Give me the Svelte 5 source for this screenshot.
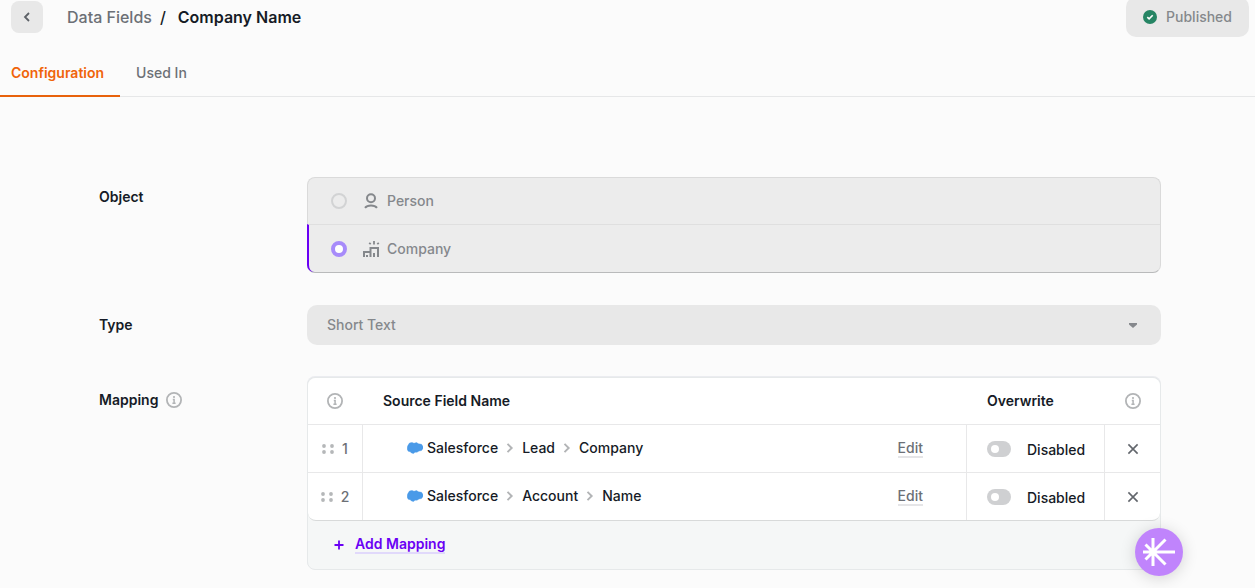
<script>
	const tabs = [
		{ label: 'Configuration', active: true },
		{ label: 'Used In', active: false }
	];

	let object = $state('company');

	let mappings = $state([
		{ id: 1, path: ['Salesforce', 'Lead', 'Company'], overwrite: false },
		{ id: 2, path: ['Salesforce', 'Account', 'Name'], overwrite: false }
	]);

	function remove(id) {
		mappings = mappings.filter((m) => m.id !== id);
	}
</script>

{#snippet info()}
	<svg class="info" width="16" height="16" viewBox="0 0 16 16" role="img" aria-label="Info">
		<circle cx="8" cy="8" r="7.1" fill="none" stroke="currentColor" stroke-width="1.8" />
		<circle cx="8" cy="5" r="1.1" fill="currentColor" />
		<path d="M6.8 7.6H8.1V11.2M6.4 11.3H9.6" fill="none" stroke="currentColor" stroke-width="1.5" />
	</svg>
{/snippet}

<header>
	<button class="back" aria-label="Back">
		<svg width="16" height="16" viewBox="0 0 16 16">
			<path d="M10 4 6 8l4 4" fill="none" stroke="currentColor" stroke-width="1.8" />
		</svg>
	</button>
	<nav class="breadcrumb" aria-label="Breadcrumb">
		<a href="#fields">Data Fields</a>
		<span>/</span>
		<h1>Company Name</h1>
	</nav>
	<button class="published" disabled>
		<svg width="14" height="14" viewBox="0 0 14 14">
			<circle cx="7" cy="7" r="7" fill="#268564" />
			<path d="m4.3 7.2 1.8 1.7 3.6-3.6" fill="none" stroke="#fff" stroke-width="1.6" />
		</svg>
		Published
	</button>
</header>

<nav class="tabs" aria-label="Sections">
	{#each tabs as tab}
		<a href="#{tab.label}" class:active={tab.active}>{tab.label}</a>
	{/each}
</nav>

<main>
	<section>
		<h2 id="object-label">Object</h2>
		<div class="options" role="radiogroup" aria-labelledby="object-label">
			<label>
				<input type="radio" name="object" value="person" bind:group={object} disabled />
				<svg width="16" height="16" viewBox="0 0 16 16" fill="none" stroke="currentColor" stroke-width="2">
					<circle cx="8" cy="5.3" r="4" />
					<path d="M2 14.9c1.2-1.5 3.3-2.3 6-2.3s4.800.8 6 2.300" />
				</svg>
				Person
			</label>
			<label class:selected={object === 'company'}>
				<input type="radio" name="object" value="company" bind:group={object} disabled />
				<svg width="18" height="18" viewBox="0 0 18 18" fill="none" stroke="currentColor" stroke-width="2">
					<path d="M2 17v-5h5.500M8.500 17V8h7.500v9M12 17v-4M5 17v-2" />
					<path d="M12 1v3.500M7.200 2.800l1.500 1.400M16.800 2.800l-1.500 1.400" stroke-width="1.800" />
				</svg>
				Company
			</label>
		</div>
	</section>

	<section>
		<h2><label for="type">Type</label></h2>
		<div class="select">
			<select id="type" disabled>
				<option>Short Text</option>
			</select>
			<svg width="8" height="5" viewBox="0 0 8 5">
				<path d="M0 0h8v1.500L4 5 0 1.500z" fill="currentColor" />
			</svg>
		</div>
	</section>

	<section>
		<h2 class="with-icon">Mapping {@render info()}</h2>
		<div class="mapping">
			<div class="sheet">
				<table>
					<thead>
						<tr>
							<th class="order">{@render info()}</th>
							<th class="source">Source Field Name</th>
							<th class="overwrite">Overwrite</th>
							<th class="remove">{@render info()}</th>
						</tr>
					</thead>
					<tbody>
						{#each mappings as mapping, i (mapping.id)}
							<tr>
								<td class="order">
									<div class="handle">
										<svg width="12" height="10" viewBox="0 0 12 10" fill="#b5b7b9">
											<circle cx="2" cy="2" r="1.900" />
											<circle cx="10" cy="2" r="1.900" />
											<circle cx="2" cy="8" r="1.900" />
											<circle cx="10" cy="8" r="1.900" />
										</svg>
										{i + 1}
									</div>
								</td>
								<td class="source">
									<div class="path">
										<svg width="16" height="12" viewBox="0 0 16 12" fill="#4a9ae8">
											<path d="M1 3.300 2.500 1 5 .4 7 1.300 9.500.6 11.500 1.800 14.500 2.300 16 4.500V6.500L14.500 8.500 12 9 10 10.200 8 10.200 6.500 11.500 4.500 11 3.200 9.700 1.300 9.300.2 7.500.3 5z" stroke="#4a9ae8" stroke-width=".4" stroke-linejoin="round" />
										</svg>
										{#each mapping.path as part, n}
											{#if n > 0}
												<svg class="chevron" width="8" height="10" viewBox="0 0 8 10">
													<path d="m1.500.8 4.200 4.200-4.200 4.200" fill="none" stroke="currentColor" stroke-width="1.900" />
												</svg>
											{/if}
											<span>{part}</span>
										{/each}
										<button class="edit">Edit</button>
									</div>
								</td>
								<td class="overwrite">
									<label class="toggle">
										<input type="checkbox" bind:checked={mapping.overwrite} />
										<span>{mapping.overwrite ? 'Enabled' : 'Disabled'}</span>
									</label>
								</td>
								<td class="remove">
									<button aria-label="Remove mapping" onclick={() => remove(mapping.id)}>
										<svg width="12" height="12" viewBox="0 0 12 12">
											<path d="m1.400 1.400 9.200 9.200m0-9.200-9.200 9.200" stroke="currentColor" stroke-width="1.600" />
										</svg>
									</button>
								</td>
							</tr>
						{/each}
					</tbody>
				</table>
			</div>
			<button class="add">
				<svg width="10" height="10" viewBox="0 0 10 10">
					<path d="M5 .5v9M.5 5h9" stroke="currentColor" stroke-width="1.800" />
				</svg>
				<span>Add Mapping</span>
			</button>
		</div>
	</section>
</main>

<button class="launcher" aria-label="Open assistant">
	<svg width="34" height="30" viewBox="0 0 34 30" fill="none" stroke="#fff" stroke-width="3">
		<path d="M1 15h32M11 1v28M11 15 23.500 2.500M11 15l12.500 12.500M11 15 3.500 7.500M11 15l-7.500 7.500" />
	</svg>
</button>

<style>
	:global(body) {
		background: #fbfbfb;
		color: #161b26;
		font: 500 14px/20px Inter, sans-serif;
		overflow: hidden;
	}
	button {
		border: none;
		padding: 0;
		font: inherit;
		color: inherit;
		background: none;
		cursor: pointer;
	}
	button:disabled {
		cursor: default;
	}
	a {
		text-decoration: none;
	}
	svg {
		display: block;
		flex: none;
	}
	h1,
	h2 {
		margin: 0;
		font-weight: 600;
	}
	header {
		display: flex;
		align-items: center;
		height: 40px;
		margin-top: -3px;
		padding: 0 6px 0 11px;
	}
	.back {
		display: grid;
		place-items: center;
		width: 32px;
		height: 32px;
		border-radius: 8px;
		background: #e8e8e8;
		color: #5d6167;
	}
	.breadcrumb {
		display: flex;
		flex: 1;
		margin-left: 24px;
		font-size: 16px;
	}
	.breadcrumb a {
		color: #6c7076;
	}
	.breadcrumb span {
		margin: 0 12px 0 8px;
	}
	h1 {
		font-size: 16px;
	}
	.published {
		display: flex;
		align-items: center;
		gap: 9px;
		height: 40px;
		padding: 0 17px;
		border-radius: 10px;
		background: #e8e8e8;
		color: #85888c;
	}
	.tabs {
		display: flex;
		margin-top: 13px;
		border-bottom: 1px solid #e6e7e8;
	}
	.tabs a {
		padding: 13px 16px 12px;
		border-bottom: 2px solid transparent;
		margin-bottom: -1px;
		color: #6c7076;
	}
	.tabs a:first-child {
		padding-left: 11px;
	}
	.tabs .active {
		border-color: #e8620c;
		color: #f0640a;
		font-weight: 600;
	}
	main {
		display: grid;
		gap: 32px;
		padding: 80px 94px 18px 99px;
	}
	section {
		display: grid;
		grid-template-columns: 208px 1fr;
		align-items: start;
	}
	h2 {
		padding-top: 10px;
		font-size: 14px;
	}
	.with-icon {
		display: flex;
		align-items: center;
		gap: 8px;
		padding-top: 13px;
	}
	.info {
		color: #b2b4b6;
	}
	.options {
		border: 1px solid #dadada;
		border-bottom-color: #b9babb;
		border-radius: 8px;
		background: #ececec;
		color: #85888c;
	}
	.options label {
		display: flex;
		align-items: center;
		height: 46px;
		padding-left: 23px;
	}
	.options label + label {
		height: 47px;
		border-top: 1px solid #dfdfdf;
	}
	.options .selected {
		margin-left: -1px;
		padding-left: 22px;
		border-left: 2px solid #6a00f4;
		border-bottom-left-radius: 7px;
	}
	.options svg {
		box-sizing: border-box;
		width: 18px;
		margin: 0 7px 0 15px;
	}
	input[type='radio'] {
		appearance: none;
		box-sizing: border-box;
		width: 16px;
		height: 16px;
		margin: 0;
		border: 2px solid #d2d3d4;
		border-radius: 50%;
	}
	input[type='radio']:checked {
		border: 4px solid #a78bfa;
		background: #fff;
	}
	.select {
		display: grid;
		align-items: center;
		color: #85888c;
	}
	.select > * {
		grid-area: 1 / 1;
	}
	.select svg {
		justify-self: end;
		margin-right: 24px;
	}
	select {
		appearance: none;
		width: 100%;
		height: 40px;
		padding: 0 20px;
		border: none;
		border-radius: 10px;
		background: #e8e8e8;
		color: #85888c;
		font: inherit;
		opacity: 1;
	}
	.mapping {
		border: 1px solid #e6e9ea;
		border-radius: 8px;
		background: #f5f7f7;
		box-shadow: 0 -1px 0 #ebecf0;
	}
	.sheet {
		border-bottom: 1px solid #d8dada;
		border-radius: 8px;
		background: #fff;
	}
	table {
		width: 100%;
		border-collapse: separate;
		border-spacing: 0;
		table-layout: fixed;
	}
	th,
	td {
		box-sizing: border-box;
		height: 48px;
		padding: 0;
		border: 0 solid #e8e8e9;
		text-align: left;
	}
	th {
		height: 46px;
		font-weight: 600;
	}
	td {
		border-top-width: 1px;
	}
	td + td {
		border-left-width: 1px;
	}
	th + th {
		border-left: 1px solid transparent;
	}
	.order {
		width: 55px;
	}
	th.order svg,
	th.remove svg {
		margin: 0 auto;
	}
	.order:first-child {
		width: 54px;
	}
	th.source {
		padding-left: 20px;
	}
	.overwrite {
		width: 138px;
		padding-left: 20px;
	}
	.remove {
		width: 56px;
	}
	.handle {
		display: flex;
		align-items: center;
		justify-content: center;
		gap: 8px;
		color: #6c7076;
	}
	.path {
		display: flex;
		align-items: center;
		padding: 0 43px 2px 44px;
	}
	.path > svg:first-child {
		margin-right: 4px;
	}
	.chevron {
		margin: 0 8px;
		color: #b2b4b6;
	}
	.edit {
		margin: 2px 0 0 auto;
		border-bottom: 2px solid #e5e5e7;
		line-height: 16px;
		color: #6c7076;
	}
	.toggle {
		display: flex;
		align-items: center;
		gap: 16px;
	}
	.toggle span {
		padding-top: 2px;
	}
	.toggle input {
		appearance: none;
		display: flex;
		align-items: center;
		width: 24px;
		height: 16px;
		margin: 0;
		padding: 0 4px;
		box-sizing: border-box;
		border-radius: 8px;
		background: #cfd0d2;
	}
	.toggle input::before {
		content: '';
		width: 8px;
		height: 8px;
		border-radius: 50%;
		background: #fff;
	}
	.toggle input:checked {
		justify-content: flex-end;
		background: #6a00f4;
	}
	.remove button {
		display: block;
		margin: 0 auto;
		color: #62666c;
	}
	.add {
		display: flex;
		align-items: center;
		gap: 11px;
		height: 48px;
		padding-left: 26px;
		color: #6a00f4;
	}
	.add span {
		border-bottom: 2px solid #e1d9fb;
		line-height: 16px;
		font-weight: 600;
	}
	.launcher {
		position: fixed;
		right: 72px;
		bottom: 12px;
		display: grid;
		place-items: center;
		width: 48px;
		height: 48px;
		border-radius: 50%;
		background: #c084fc;
		box-shadow: 0 2px 16px rgba(0, 0, 0, 0.16);
	}
</style>
